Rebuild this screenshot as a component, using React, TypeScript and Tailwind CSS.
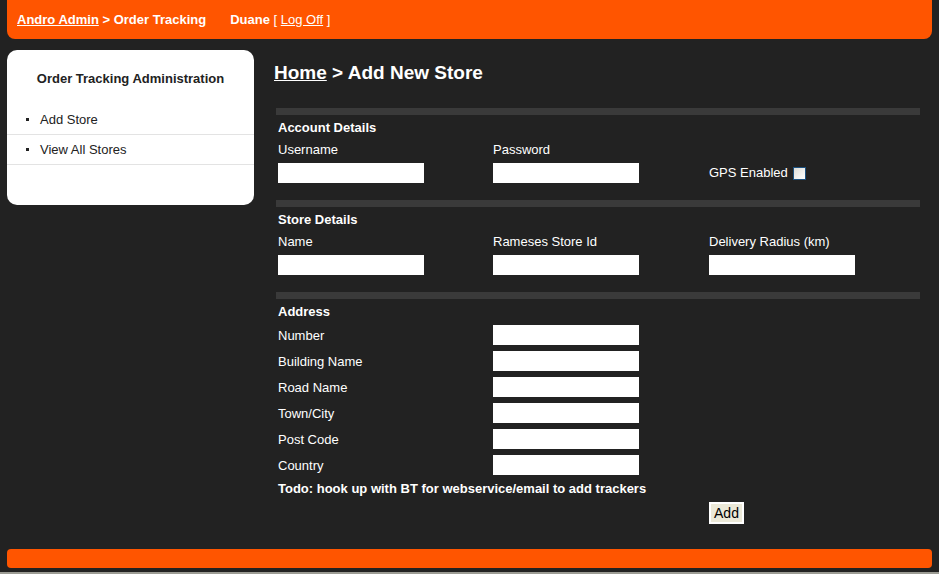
import React from "react";

const font = { fontFamily: '"Liberation Sans", Arial, sans-serif' };

function Input({ className = "" }: { className?: string }) {
  return <div className={"h-[20px] w-[146px] bg-white " + className} />;
}

function Bar() {
  return <div className="h-[7px] bg-[#3a3a3a]" />;
}

function Heading({ children }: { children: React.ReactNode }) {
  return (
    <div className="h-[22px] flex items-center pl-[2px] pt-[3px] text-[13px] font-bold text-white">
      {children}
    </div>
  );
}

const cols = "grid grid-cols-[215px_216px_1fr]";

export default function App() {
  const address = ["Number", "Building Name", "Road Name", "Town/City", "Post Code", "Country"];
  return (
    <div className="w-[939px] h-[574px] bg-[#222222] flex flex-col overflow-hidden" style={font}>
      {/* header */}
      <div className="mx-[7px] h-[39px] bg-[#ff5500] rounded-b-[8px] flex items-center pl-[10px] text-[13px] text-white">
        <span className="font-bold underline">Andro Admin</span>
        <span className="font-bold">&nbsp;&gt; Order Tracking</span>
        <span className="font-bold ml-[24px]">Duane</span>
        <span>&nbsp;[ <span className="underline">Log Off</span> ]</span>
      </div>

      <div className="flex flex-1">
        {/* sidebar */}
        <div className="ml-[7px] mt-[11px] w-[247px] h-[155px] bg-white rounded-[10px] text-[#222]">
          <div className="h-[55px] flex items-center justify-center text-[13px] font-bold pt-[2px]">
            Order Tracking Administration
          </div>
          <div className="border-b border-[#e3e3e3] h-[30px] flex items-center text-[13px]">
            <span className="ml-[19px] w-[3px] h-[3px] bg-[#222]" />
            <span className="ml-[11px]">Add Store</span>
          </div>
          <div className="border-b border-[#e3e3e3] h-[30px] flex items-center text-[13px]">
            <span className="ml-[19px] w-[3px] h-[3px] bg-[#222]" />
            <span className="ml-[11px]">View All Stores</span>
          </div>
        </div>

        {/* main */}
        <div className="ml-[20px] flex-1 pr-[19px]">
          <div className="mt-[23px] h-[22px] flex items-center text-[19px] font-bold text-white">
            <span className="underline">Home</span>
            <span>&nbsp;&gt; Add New Store</span>
          </div>

          <div className="ml-[2px] mt-[24px] text-white text-[13px]">
            {/* account */}
            <Bar />
            <Heading>Account Details</Heading>
            <div className={cols + " h-[22px] items-center pt-[3px]"}>
              <div className="pl-[2px]">Username</div>
              <div className="pl-[2px]">Password</div>
              <div />
            </div>
            <div className={cols + " pt-[4px] items-center"}>
              <div className="pl-[2px]"><Input /></div>
              <div className="pl-[2px]"><Input /></div>
              <div className="pl-[2px] flex items-center">
                <span>GPS Enabled</span>
                <span className="ml-[5px] w-[13px] h-[13px] border border-[#1c5180] bg-gradient-to-br from-[#dcdcd7] to-white" />
              </div>
            </div>

            {/* store */}
            <div className="mt-[17px]"><Bar /></div>
            <Heading>Store Details</Heading>
            <div className={cols + " h-[22px] items-center pt-[3px]"}>
              <div className="pl-[2px]">Name</div>
              <div className="pl-[2px]">Rameses Store Id</div>
              <div className="pl-[2px]">Delivery Radius (km)</div>
            </div>
            <div className={cols + " pt-[4px]"}>
              <div className="pl-[2px]"><Input /></div>
              <div className="pl-[2px]"><Input /></div>
              <div className="pl-[2px]"><Input /></div>
            </div>

            {/* address */}
            <div className="mt-[17px]"><Bar /></div>
            <Heading>Address</Heading>
            <div className="mt-[1px]">
              {address.map((a) => (
                <div key={a} className={cols + " h-[26px] items-center"}>
                  <div className="pl-[2px] pt-[1px]">{a}</div>
                  <div className="pl-[2px]"><Input /></div>
                  <div />
                </div>
              ))}
            </div>
            <div className="h-[21px] flex items-center pl-[2px] pt-[1px] font-bold">
              Todo: hook up with BT for webservice/email to add trackers
            </div>
            <div className={cols + " pt-[3px]"}>
              <div />
              <div />
              <div className="pl-[2px]">
                <div className="w-[35px] h-[22px] border-[2px] border-white bg-[#ece9d8] text-black flex items-center justify-center text-[14px]">
                  Add
                </div>
              </div>
            </div>
          </div>
        </div>
      </div>

      {/* footer */}
      <div className="mx-[7px] h-[19px] bg-[#ff5500] rounded-[4px]" />
      <div className="h-[4px]" />
      <div className="h-[2px] bg-[#9c9c94]" />
    </div>
  );
}
